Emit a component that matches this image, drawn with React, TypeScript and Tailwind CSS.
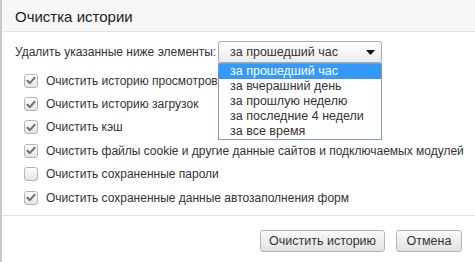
import React from 'react';

const ranges = [
  'за прошедший час',
  'за вчерашний день',
  'за прошлую неделю',
  'за последние 4 недели',
  'за все время',
];

const items: { label: string; checked: boolean }[] = [
  { label: 'Очистить историю просмотров', checked: true },
  { label: 'Очистить историю загрузок', checked: true },
  { label: 'Очистить кэш', checked: true },
  { label: 'Очистить файлы cookie и другие данные сайтов и подключаемых модулей', checked: true },
  { label: 'Очистить сохраненные пароли', checked: false },
  { label: 'Очистить сохраненные данные автозаполнения форм', checked: true },
];

// ─── Checkbox ────────────────────────────────────────────────────────────────

function Box({ checked }: { checked: boolean }) {
  return (
    <span className="flex h-[14px] w-[14px] flex-shrink-0 items-center justify-center rounded-[3px] border border-[#b5b5b5] bg-gradient-to-b from-[#fdfdfd] to-[#e4e4e4] shadow-[inset_0_1px_0_#fff]">
      {checked && (
        <svg width="10" height="9" viewBox="0 0 10 9" aria-hidden="true">
          <path d="M1.5 4.8l2.3 2.3L8.6 1.8" fill="none" stroke="#6e6e6e" strokeWidth="2" strokeLinecap="round" strokeLinejoin="round" />
        </svg>
      )}
    </span>
  );
}

export default function App() {
  return (
    <div className="relative h-[262px] w-[475px] overflow-hidden border-l-2 border-[#c9c9c9] bg-white font-['Liberation_Sans',Arial,sans-serif] text-[12px] text-[#333]">
      {/* ── Header ── */}
      <div className="flex h-[32px] items-center border-b border-[#e3e3e3] bg-[#f7f7f7] pl-[13px] pt-[3px] text-[15px] text-[#222]">
        Очистка истории
      </div>

      {/* ── Body ── */}
      <div className="flex flex-col pl-[13px] pt-[9px]">
        <div className="flex h-[22px] items-center">
          <span className="w-[203px] flex-shrink-0 whitespace-nowrap">Удалить указанные ниже элементы:</span>
          <div className="relative">
            <div className="flex h-[22px] w-[164px] items-center justify-between rounded-[3px] border border-[#a9a9a9] bg-gradient-to-b from-white to-[#ececec] pl-[11px] pr-[6px] text-[12.5px]">
              <span>за прошедший час</span>
              <svg width="9" height="5" viewBox="0 0 9 5" aria-hidden="true">
                <path d="M0 0h9L4.5 5z" fill="#111" />
              </svg>
            </div>
            {/* Open list */}
            <ul className="absolute left-0 top-[22px] z-10 w-[164px] border border-[#7f9db9] bg-white text-[12.5px]">
              {ranges.map((r, i) => (
                <li
                  key={r}
                  className={`flex h-[15px] items-center pl-[11px] leading-none ${i === 0 ? 'bg-[#3399ff] text-white' : ''}`}
                >
                  {r}
                </li>
              ))}
            </ul>
          </div>
        </div>

        <div className="mt-[6px] flex flex-col">
          {items.map((it) => (
            <label key={it.label} className="flex h-[23.4px] items-center gap-[8px] pl-[9px]">
              <Box checked={it.checked} />
              <span className="whitespace-nowrap">{it.label}</span>
            </label>
          ))}
        </div>
      </div>

      {/* ── Footer ── */}
      <div className="mt-[6px] flex justify-end gap-[11px] border-t border-[#e3e3e3] pr-[13px] pt-[14px]">
        <button className="h-[22px] w-[125px] rounded-[3px] border border-[#b4b4b4] bg-gradient-to-b from-[#fafafa] to-[#e2e2e2] text-[12.5px] text-[#333]">
          Очистить историю
        </button>
        <button className="h-[22px] w-[66px] rounded-[3px] border border-[#b4b4b4] bg-gradient-to-b from-[#fafafa] to-[#e2e2e2] text-[12.5px] text-[#333]">
          Отмена
        </button>
      </div>
    </div>
  );
}
